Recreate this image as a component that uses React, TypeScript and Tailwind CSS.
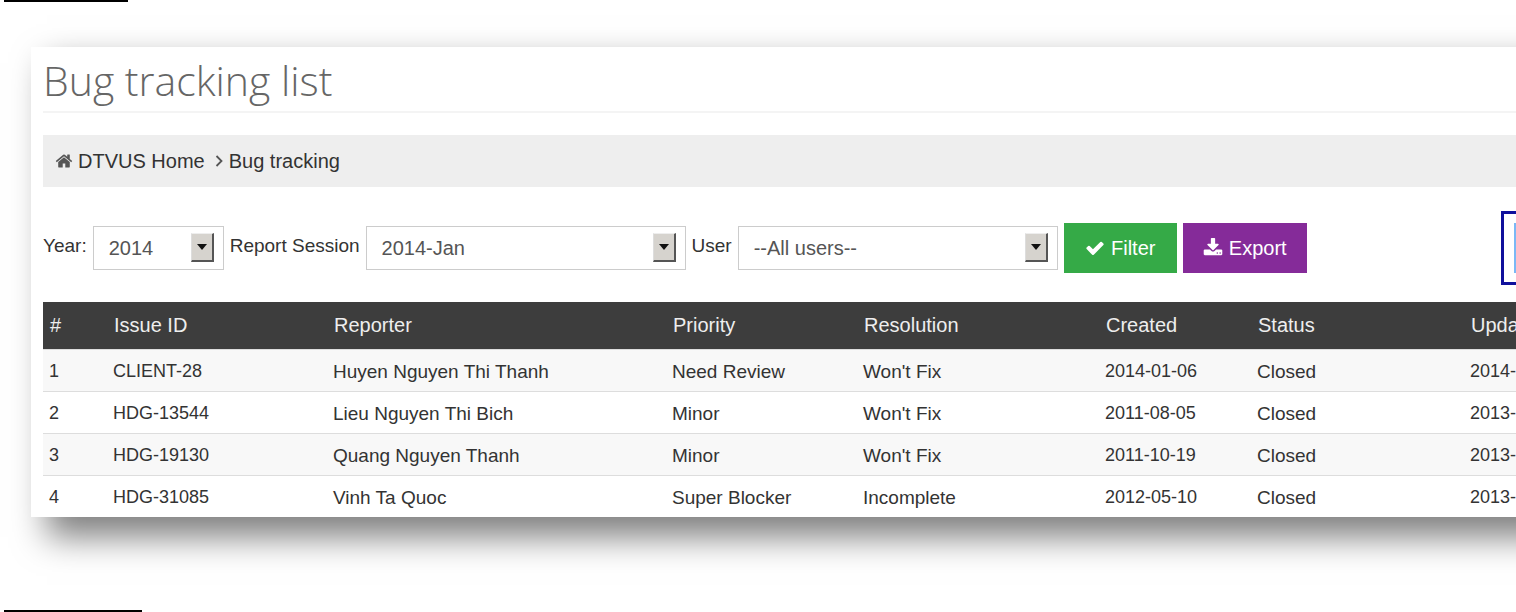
import React from "react";

const bugs = [
  { id: "CLIENT-28", reporter: "Huyen Nguyen Thi Thanh", priority: "Need Review", resolution: "Won't Fix", created: "2014-01-06", status: "Closed", updated: "2014-" },
  { id: "HDG-13544", reporter: "Lieu Nguyen Thi Bich", priority: "Minor", resolution: "Won't Fix", created: "2011-08-05", status: "Closed", updated: "2013-" },
  { id: "HDG-19130", reporter: "Quang Nguyen Thanh", priority: "Minor", resolution: "Won't Fix", created: "2011-10-19", status: "Closed", updated: "2013-" },
  { id: "HDG-31085", reporter: "Vinh Ta Quoc", priority: "Super Blocker", resolution: "Incomplete", created: "2012-05-10", status: "Closed", updated: "2013-" },
];

const columns = ["#", "Issue ID", "Reporter", "Priority", "Resolution", "Created", "Status", "Updated"];

const icons = {
  home: "M1472 992v480q0 26-19 45t-45 19h-384v-384h-256v384h-384q-26 0-45-19t-19-45v-480q0-1 .5-3t.5-3l575-474 575 474q1 2 1 6zm223-69l-62 74q-8 9-21 11h-3q-13 0-21-7l-692-577-692 577q-12 8-24 7-13-2-21-11l-62-74q-8-10-7-23.5t11-21.5l719-599q32-26 76-26t76 26l244 204v-195q0-14 9-23t23-9h192q14 0 23 9t9 23v408l219 182q10 8 11 21.5t-7 23.5z",
  check: "M1671 566q0 40-28 68l-724 724-136 136q-28 28-68 28t-68-28l-136-136-362-362q-28-28-28-68t28-68l136-136q28-28 68-28t68 28l294 295 656-657q28-28 68-28t68 28l136 136q28 28 28 68z",
  download: "M1344 1344q0-26-19-45t-45-19-45 19-19 45 19 45 45 19 45-19 19-45zm256 0q0-26-19-45t-45-19-45 19-19 45 19 45 45 19 45-19 19-45zm128-224v320q0 40-28 68t-68 28h-1472q-40 0-68-28t-28-68v-320q0-40 28-68t68-28h465l135 136q58 56 136 56t136-56l136-136h464q40 0 68 28t28 68zm-325-569q17 41-14 70l-448 448q-18 19-45 19t-45-19l-448-448q-31-29-14-70 17-39 59-39h256v-448q0-26 19-45t45-19h256q26 0 45 19t19 45v448h256q42 0 59 39z",
};

function Icon({ name, className }: { name: keyof typeof icons; className: string }) {
  return (
    <svg viewBox="0 0 1792 1792" fill="currentColor" aria-hidden="true" className={className}>
      <path d={icons[name]} />
    </svg>
  );
}

function SelectField({ id, label, value, width }: { id: string; label: string; value: string; width: string }) {
  return (
    <div className="flex shrink-0 items-center gap-[6px]">
      <label htmlFor={id} className="pb-1 text-[19px] leading-6 text-[#333]">
        {label}
      </label>
      <div className="relative">
        <select
          id={id}
          defaultValue={value}
          className={`h-11 appearance-none rounded-none border border-[#ccc] bg-white pl-[15px] text-[20px] text-[#555] ${width}`}
        >
          <option>{value}</option>
        </select>
        <span className="pointer-events-none absolute top-[7px] right-[10px] flex h-[29px] w-[23px] items-center justify-center border-t border-r-2 border-b-2 border-l border-t-[#eee] border-r-[#555] border-b-[#555] border-l-[#ddd] bg-[#d6d3ce]">
          <svg viewBox="0 0 10 6" className="h-[6px] w-[10px]" aria-hidden="true">
            <path d="M0 0h10L5 6z" fill="#111" />
          </svg>
        </span>
      </div>
    </div>
  );
}

export default function App() {
  return (
    <div className="flex min-h-screen flex-col overflow-hidden bg-white font-['Liberation_Sans',Arial,sans-serif]">
      <div className="ml-1 h-[2px] w-[124px] bg-black" />

      <main className="mt-[45px] -mr-[120px] ml-[31px] bg-white px-3 shadow-[18px_18px_32px_2px_rgba(0,0,0,0.5)]">
        <h1 className="border-b-2 border-[#f4f4f4] pt-[5px] pb-[3px] font-['Open_Sans',sans-serif] text-[41px] leading-[56px] font-light text-[#666]">
          Bug tracking list
        </h1>

        <nav aria-label="Breadcrumb" className="mt-[22px] flex h-[52px] items-center bg-[#eee] pl-3 text-[20px] text-[#333]">
          <Icon name="home" className="h-[18px] w-[18px] text-[#555]" />
          <a href="#home" className="ml-[5px]">
            DTVUS Home
          </a>
          <svg viewBox="0 0 8 12" className="mr-[6px] ml-[10px] h-3 w-2" fill="none" stroke="#555" strokeWidth="1.8" aria-hidden="true">
            <path d="M1.5 1L6.5 6L1.5 11" />
          </svg>
          <a href="#bugs">Bug tracking</a>
        </nav>

        <form className="mt-6 flex items-center gap-[6px]" onSubmit={(e) => e.preventDefault()}>
          <SelectField id="year" label="Year:" value="2014" width="w-[131px]" />
          <SelectField id="session" label="Report Session" value="2014-Jan" width="w-[320px]" />
          <SelectField id="user" label="User" value="--All users--" width="w-[320px]" />
          <button type="submit" className="flex h-[50px] w-[113px] shrink-0 items-center justify-center gap-[6px] bg-[#35aa47] text-[20px] text-white">
            <Icon name="check" className="h-5 w-5" />
            Filter
          </button>
          <button type="button" className="flex h-[50px] w-[124px] shrink-0 items-center justify-center gap-[6px] bg-[#852b99] text-[20px] text-white">
            <Icon name="download" className="h-5 w-5" />
            Export
          </button>
          <div className="ml-auto h-[74px] w-[123px] shrink-0 border-3 border-[#10109c] px-[10px] py-[9px]">
            <button type="button" aria-label="More actions" className="h-full w-full bg-[#7ab8f5]" />
          </div>
        </form>

        <table className="mt-[17px] w-full table-fixed border-separate border-spacing-0 text-left whitespace-nowrap">
          <colgroup>
            <col className="w-16" />
            <col className="w-[220px]" />
            <col className="w-[339px]" />
            <col className="w-[191px]" />
            <col className="w-[242px]" />
            <col className="w-[152px]" />
            <col className="w-[213px]" />
            <col />
          </colgroup>
          <thead>
            <tr className="bg-[#3d3d3d] text-[20px] leading-[47px] text-[#eee]">
              {columns.map((c) => (
                <th key={c} className="border-b border-[#ddd] px-[7px] font-normal">
                  {c}
                </th>
              ))}
            </tr>
          </thead>
          <tbody className="text-[19px] leading-[25px] text-[#333]">
            {bugs.map((b, i) => (
              <tr key={b.id} className="odd:bg-[#f8f8f8] [&>td]:border-b [&>td]:border-[#ddd] [&>td]:px-[6px] [&>td]:pt-[9px] [&>td]:pb-[7px] last:[&>td]:border-b-0">
                <td className="text-[18px]">{i + 1}</td>
                <td className="text-[18px]">{b.id}</td>
                <td>{b.reporter}</td>
                <td>{b.priority}</td>
                <td>{b.resolution}</td>
                <td className="text-[18px]">{b.created}</td>
                <td>{b.status}</td>
                <td className="text-[18px]">{b.updated}</td>
              </tr>
            ))}
          </tbody>
        </table>
      </main>

      <div className="mt-auto ml-1 h-[2px] w-[138px] bg-black" />
    </div>
  );
}
